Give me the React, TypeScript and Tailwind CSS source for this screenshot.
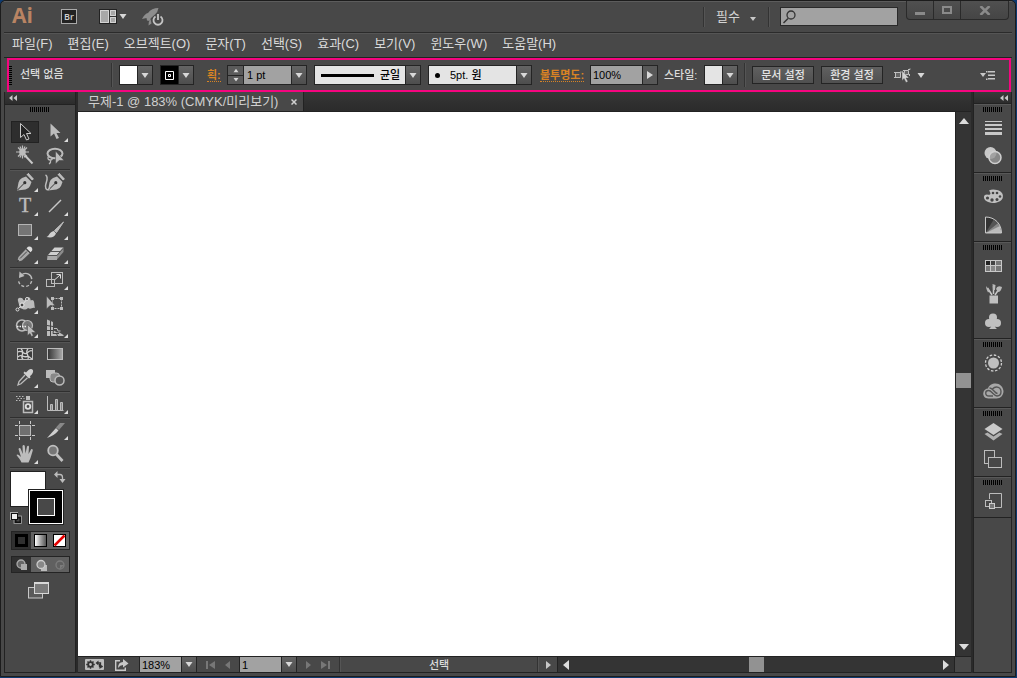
import React from 'react';

const KR = "font-['Liberation_Sans','Noto_Sans_CJK_KR',sans-serif]";

type Kids = { children?: React.ReactNode };

function Down({ className = '' }: { className?: string }) {
  return (
    <svg width="8" height="5" viewBox="0 0 8 5" className={'shrink-0 ' + className} aria-hidden="true">
      <path d="M0.5 0h7L4 5z" fill="#d8d8d8" />
    </svg>
  );
}

function Grip() {
  return (
    <div className="mx-auto flex h-[5px] w-[19px] shrink-0 justify-between">
      {Array.from({ length: 10 }, (_, i) => (
        <i key={i} className="h-full w-px bg-black" />
      ))}
    </div>
  );
}

function ArrowButton({ label }: { label: string }) {
  return (
    <button
      type="button"
      aria-label={label}
      className="flex h-full w-[15px] shrink-0 items-center justify-center border-l border-[#242424] bg-linear-to-b from-[#646464] to-[#4e4e4e]"
    >
      <Down />
    </button>
  );
}

function Divider({ className = '' }: { className?: string }) {
  return <i className={'w-0.5 shrink-0 border-l border-r border-l-[#333] border-r-[#555] ' + className} />;
}

/* ---------- Toolbox ---------- */

function Tool({ label, more, active, children }: Kids & { label: string; more?: boolean; active?: boolean }) {
  return (
    <button
      type="button"
      aria-label={label}
      title={label}
      className="flex h-6 w-[30px] items-center justify-center"
    >
      <svg width="30" height="24" viewBox="0 0 30 24" fill="none" stroke="none" className="shrink-0">
        {active && <rect x="1.5" y="1.5" width="27" height="21" fill="#2e2e2e" stroke="#222" />}
        {children}
        {more && <path d="M28 18v4h-4z" fill="#dcdcdc" />}
      </svg>
    </button>
  );
}

const L = '#bcbcbc';

function ToolGroup({ children }: Kids) {
  return (
    <div className="grid w-[60px] grid-cols-2 border-b border-[#2f2f2f] pb-px shadow-[0_1px_0_0_#555]">
      {children}
    </div>
  );
}

function Nib() {
  return (
    <>
      <path d="M7 20.500l1.500-8q.5-3 3.500-4.500l4-1.500 5.500 5.500-1.500 4q-1.500 3-4.500 3.500z" fill={L} />
      <path d="M16 4.500l2.500-2 6 6.500-2.500 2z" fill={L} stroke="#333" strokeWidth=".7" />
      <path d="M7.500 20l6.500-6.500" stroke="#333" />
      <circle cx="14.800" cy="12.700" r="1.600" fill="#333" />
    </>
  );
}

function Toolbox() {
  return (
    <aside className="flex w-[72px] shrink-0 flex-col border-x border-b border-[#222] bg-[#484848]">
      <button type="button" aria-label="패널 축소" className="flex h-[13px] w-full shrink-0 items-center border-b border-[#222] bg-linear-to-b from-[#3a3a3a] to-[#2c2c2c] pl-1">
        <Chevrons />
      </button>
      <div className="flex flex-col pt-0.5 pl-[5px]">
        <div className="pr-[7px]"><Grip /></div>
        <div className="h-2" />
        <ToolGroup>
          <Tool label="선택 도구" active>
            <path d="M10.500 3.500v14l3.500-3 2.500 5.500 2.500-1-2.500-5.500h4.500z" fill="#222" stroke="#c8c8c8" />
          </Tool>
          <Tool label="직접 선택 도구" more>
            <path d="M10.500 3.500v13l3.500-3 2.500 5.500 2.500-1-2.500-5h4z" fill={L} />
          </Tool>
          <Tool label="자동 선택 도구">
            <path d="M12.500 1.500v13M6 8h13M8 3.500l9 9M17 3.500l-9 9M10 2.500l5 11M15 2.500l-5 11" stroke={L} strokeWidth="1.200" />
            <circle cx="12.500" cy="8" r="3.300" fill={L} />
            <path d="M15 11.500l7.500 8" stroke="#c8c8c8" strokeWidth="2" />
          </Tool>
          <Tool label="올가미 도구">
            <ellipse cx="15" cy="9.500" rx="7.500" ry="4.800" stroke={L} strokeWidth="2" />
            <path d="M9 12c-2 2-1 4 1 4s3-1 1.500-2.500M9.500 16c2 1 1 3-.5 4" stroke={L} strokeWidth="1.300" />
            <path d="M15.500 7v13l3.500-3.500h5z" fill={L} stroke="#444" strokeWidth=".5" />
          </Tool>
        </ToolGroup>
        <ToolGroup>
          <Tool label="펜 도구" more><Nib /></Tool>
          <Tool label="곡률 도구">
            <g transform="translate(1 0)"><Nib /></g>
            <path d="M5.500 5c4 2 0 8 0 11 0 4 2.500 5 4 2" stroke={L} strokeWidth="1.500" />
          </Tool>
          <Tool label="문자 도구" more>
            <text x="15" y="18" textAnchor="middle" fontFamily="Liberation Serif, serif" fontSize="20" fill={L} stroke={L} strokeWidth=".4">T</text>
          </Tool>
          <Tool label="선분 도구" more><path d="M9 18L21 6" stroke="#c8c8c8" strokeWidth="1.500" /></Tool>
          <Tool label="사각형 도구" more><rect x="8.500" y="6.500" width="13" height="11" fill="#757575" stroke="#b4b4b4" /></Tool>
          <Tool label="페인트브러시 도구" more>
            <path d="M23.500 4l-7 10.500-2-2z" fill={L} stroke={L} />
            <path d="M14 13l2 2.500c-1.500 4-5 4.500-9.500 3.500 3-1 2.500-5 7.500-6z" fill="#d0d0d0" />
          </Tool>
          <Tool label="연필 도구" more>
            <path d="M7 20l1.500-5 7.500-8 4 4-8 7.500z" fill="#a8a8a8" />
            <path d="M16.500 6.300l1.500-1.500q2-1 3.500.5t.5 3.500l-1.500 1.500z" fill="#dcdcdc" />
            <path d="M7 20l.7-2.500 1.800 1.700z" fill="#222" />
            <path d="M15.500 6.800l4.500 4M10 16.500l7-7" stroke="#444" strokeWidth="1" />
          </Tool>
          <Tool label="지우개 도구" more>
            <path d="M8 13l6.500-7.500h9L17 13z" fill="#d0d0d0" />
            <path d="M17 13l6.500-7.500v4.500L17 17.500z" fill="#8c8c8c" />
            <path d="M7.500 13.500H17v4.500H7z" fill="#aaa" />
            <path d="M11 9.500h9M7.500 13.500h9.500l6-7" stroke="#555" />
          </Tool>
        </ToolGroup>
        <ToolGroup>
          <Tool label="회전 도구" more>
            <path d="M12 6.500C17 3.500 22 7 21.800 12c-.3 4-3.300 6.500-6.800 6.500s-6.800-3-6.500-7" stroke={L} strokeWidth="1.400" strokeDasharray="13 2 3 2 3 2 3 2 3 2" />
            <path d="M9.500 3.500l-.5 6.500 5.500-2z" fill={L} />
          </Tool>
          <Tool label="크기 조절 도구" more>
            <rect x="11.500" y="4.500" width="11" height="11" stroke={L} />
            <rect x="6.500" y="11.500" width="8" height="7" stroke={L} />
            <path d="M15 11.500l5-4.500M16.500 6.500h4v4" stroke="#ddd" />
          </Tool>
          <Tool label="폭 도구" more>
            <path d="M8 9c-1-3 2-4 3-3 3 0 1 3 4 2 1-3 3-4 5-2 1 2 0 3 2 2 3 0 2 5 3 8-3-1-4 2-7 0-3 3-5 1-8 0z" fill={L} />
            <path d="M7 18l5.500-5.500 5-6" stroke="#e0e0e0" />
            <circle cx="7.500" cy="17.500" r="1.500" fill="#444" stroke="#ddd" /><circle cx="12" cy="13" r="2" fill="#444" stroke="#eee" /><circle cx="17" cy="7" r="1.500" fill="#444" stroke="#ddd" />
          </Tool>
          <Tool label="자유 변형 도구">
            <rect x="12.500" y="6.500" width="9" height="10" stroke={L} strokeDasharray="2 1" />
            <path d="M11 5h3v3h-3zM20 5h3v3h-3zM20 15h3v3h-3zM11 15h3v3h-3z" fill={L} />
            <path d="M6.500 4v13l3.500-3.500h5z" fill={L} stroke="#444" strokeWidth=".5" />
          </Tool>
          <Tool label="도형 구성 도구" more>
            <circle cx="12" cy="9.500" r="5.500" stroke={L} strokeWidth="1.500" /><circle cx="17.500" cy="9.500" r="5" fill="#777" stroke={L} strokeWidth="1.200" />
            <path d="M7 10.500h10" stroke="#eee" strokeWidth="1.500" strokeDasharray="1.500 1" />
            <path d="M17.500 8.500v11l2.500-2 1.500 3 1.800-1-1.500-3h4z" fill={L} stroke="#444" strokeWidth=".5" />
          </Tool>
          <Tool label="원근감 격자 도구" more>
            <path d="M7 3.500l6 2.500v8l4 2.500h2.500l4 2.500v1H7z" fill={L} />
            <path d="M10.500 5v15M7 9.500l6 1M7 14.500h6M13.500 14l-.5 3.500h6M16.500 17.500l1 2.500" stroke="#444" strokeWidth="1" />
            <path d="M14 12.500h3l1 2.500h2.500" stroke={L} />
          </Tool>
        </ToolGroup>
        <ToolGroup>
          <Tool label="망 도구">
            <rect x="7.500" y="6.500" width="15" height="11" stroke={L} fill="#3c3c3c" />
            <path d="M8 10c4-3 6 4 9 1s4-3 5-2M8 15c3-4 6 2 10-1l4 3M11 7c5 4-2 7 2 10M18 7c-4 4 2 6 0 10" stroke="#d0d0d0" strokeWidth="1.300" />
          </Tool>
          <Tool label="그레이디언트 도구">
            <defs><linearGradient id="tg"><stop stopColor="#333" /><stop offset="1" stopColor="#aaa" /></linearGradient></defs>
            <rect x="7.500" y="6.500" width="15" height="11" fill="url(#tg)" stroke={L} />
          </Tool>
          <Tool label="스포이드 도구" more>
            <path d="M16 6.500l2.500-2.500q3-2 4.500.3.700 2-1 4l-2 2 .5 1.200-1.500 1-5.500-5.500 1-1.500z" fill="#cfcfcf" />
            <path d="M15 9l-6 6.500-1 3.500 3-1.200 6.500-6" stroke={L} strokeWidth="1.300" />
          </Tool>
          <Tool label="블렌드 도구">
            <path d="M6 4h9v8H6z" fill={L} /><rect x="10" y="7" width="9.500" height="9" rx="3" fill="#888" stroke={L} />
            <circle cx="19.500" cy="14.500" r="4.500" fill="#555" stroke={L} strokeWidth="1.500" />
          </Tool>
        </ToolGroup>
        <ToolGroup>
          <Tool label="심볼 분무기 도구" more>
            <path d="M13.500 9.500h9v11h-9z" stroke={L} strokeWidth="1.500" /><path d="M16 4h4v4h-4z" fill={L} />
            <circle cx="18" cy="14.500" r="2.300" stroke="#ddd" strokeWidth="1.800" />
            <path d="M6 4.500h9M7.500 6.500h7M6 8.500h5" stroke="#bbb" strokeDasharray="1.500 1.500" />
          </Tool>
          <Tool label="막대 그래프 도구" more>
            <path d="M7.500 4v14.500h16" stroke={L} /><path d="M10.500 12.500h2v6h-2zM15.500 7.500h2v11h-2zM20.500 10.500h2v8h-2z" stroke={L} fill="#888" />
          </Tool>
        </ToolGroup>
        <ToolGroup>
          <Tool label="대지 도구">
            <rect x="9.500" y="7.500" width="11" height="10" fill="#707070" stroke={L} />
            <path d="M9.500 3v3M20.500 3v3M9.500 19v3M20.500 19v3M5 7.500h3M22 7.500h3M5 17.500h3M22 17.500h3" stroke="#c8c8c8" />
          </Tool>
          <Tool label="분할 영역 도구" more>
            <path d="M7 20l9-10 2.500 2.500q-4 5-11.500 7.500z" fill="#d0d0d0" /><path d="M16 9.500l4-4.500h5l-6 7z" fill="#888" />
          </Tool>
          <Tool label="손 도구" more>
            <path d="M11.500 20.500c-1-3-3.500-5-5-7.500 1-1.500 2.500 0 4.500 2L8.500 7c.5-1.500 2-1 2.300 0l2 5-.3-8c.5-1.500 2-1.200 2.300 0l.7 7.500L17 4.500c.8-1.300 2-.7 2 .5l-.5 7L21 7.500c1-1 2.200 0 1.700 1.200L20.500 16l-2 4.500z" fill={L} />
          </Tool>
          <Tool label="돋보기 도구">
            <circle cx="13" cy="8.500" r="4.800" fill="#777" stroke="#c0c0c0" strokeWidth="1.800" /><path d="M16.500 12.500l6 6.500" stroke="#c0c0c0" strokeWidth="2.800" />
          </Tool>
        </ToolGroup>

        <div className="relative mt-[3px] h-[56px] w-[60px]">
          <button type="button" aria-label="칠" className="absolute top-0 left-0 size-[36px] border border-[#222] bg-white" />
          <button type="button" aria-label="획" className="absolute top-[18px] left-[18px] flex size-[36px] items-center justify-center border border-[#222] bg-black outline outline-1 -outline-offset-2 outline-white">
            <i className="size-[18px] border border-white bg-[#484848]" />
          </button>
          <button type="button" aria-label="칠과 획 교체" className="absolute top-0 left-[43px] size-[14px]">
            <svg width="14" height="14" viewBox="0 0 14 14" fill="none"><path d="M3 3.500h4q2.500 0 2.500 3v3" stroke={L} strokeWidth="1.300" /><path d="M1 3.500L4.500 0v7zM6.500 8h6l-3 4z" fill={L} /></svg>
          </button>
          <button type="button" aria-label="초기값 칠과 획" className="absolute top-[41px] left-0 size-3">
            <svg width="12" height="12" viewBox="0 0 12 12" fill="none"><rect x="5.500" y="5.500" width="5" height="5" stroke="#111" strokeWidth="2" /><rect x="4" y="4" width="7.500" height="7.500" stroke="#aaa" strokeWidth=".8" /><rect x=".5" y=".5" width="7" height="7" fill="#eee" stroke="#aaa" /><rect x="1.500" y="1.500" width="6" height="6" fill="#eee" stroke="#111" /></svg>
          </button>
        </div>
        <div className="mt-1 ml-px flex h-[19px] w-[59px] border border-[#242424] bg-[#626262]">
          <button type="button" aria-label="색상" className="flex flex-1 items-center justify-center bg-[#303030]"><i className="size-[13px] border-[3px] border-black bg-[#303030]" /></button>
          <button type="button" aria-label="그레이디언트" className="flex flex-1 items-center justify-center"><i className="size-[13px] border border-black bg-linear-to-r from-white to-[#555]" /></button>
          <button type="button" aria-label="없음" className="flex flex-1 items-center justify-center">
            <svg width="13" height="13" viewBox="0 0 13 13"><rect x=".5" y=".5" width="12" height="12" fill="#fff" stroke="#000" /><path d="M1.500 11.500l10-10" stroke="#e60000" strokeWidth="2.500" /></svg>
          </button>
        </div>
        <div className="mt-1.5 ml-px flex h-[17px] w-[59px] border border-[#242424] bg-[#606060]">
          <button type="button" aria-label="표준 그리기" className="flex flex-1 items-center justify-center bg-[#303030]"><svg width="14" height="12" viewBox="0 0 14 12"><circle cx="6" cy="5" r="4" fill="#666" stroke="#aaa" strokeWidth="1.300" /><path d="M6 5h6v6H6z" fill="#aaa" /></svg></button>
          <button type="button" aria-label="배경 그리기" className="flex flex-1 items-center justify-center"><svg width="14" height="12" viewBox="0 0 14 12"><path d="M7 6h6v6H7z" fill="#bbb" /><circle cx="7" cy="5.500" r="4" fill="#888" stroke="#ccc" strokeWidth="1.300" /></svg></button>
          <button type="button" aria-label="내부 그리기" className="flex flex-1 items-center justify-center"><svg width="14" height="12" viewBox="0 0 14 12"><circle cx="7" cy="6" r="4" fill="none" stroke="#7c7c7c" strokeWidth="1.300" /><path d="M7 6h4l-4 4z" fill="#7c7c7c" /></svg></button>
        </div>
        <button type="button" aria-label="화면 모드 변경" className="mt-[9px] ml-[18px] h-[17px] w-[21px]">
          <svg width="21" height="17" viewBox="0 0 21 17"><rect x=".5" y="5.500" width="14" height="10.500" fill="#5a5a5a" stroke="#c8c8c8" /><rect x="6.500" y=".5" width="14" height="11" fill="#7a7a7a" stroke="#d8d8d8" /><path d="M6 1.500h15" stroke="#d8d8d8" /></svg>
        </button>
      </div>
    </aside>
  );
}

function Chevrons() {
  return (
    <svg width="8" height="6" viewBox="0 0 8 6" fill="#c8c8c8" aria-hidden="true"><path d="M3.500 0v6L0 3zM8 0v6L4.500 3z" /></svg>
  );
}

/* ---------- Panel dock ---------- */

function PanelIcon({ label, children }: Kids & { label: string }) {
  return (
    <button type="button" aria-label={label} title={label} className="flex h-7 w-full items-center justify-center">
      <svg width="24" height="24" viewBox="0 0 24 24" fill="none">{children}</svg>
    </button>
  );
}

function PanelGroup({ children }: Kids) {
  return (
    <section className="border-b border-[#222] pb-0.5 shadow-[inset_0_1px_0_0_#585858]">
      <div className="py-[3px]"><Grip /></div>
      <div className="-mt-px">{children}</div>
    </section>
  );
}

function Dock() {
  return (
    <aside className="flex w-[39px] shrink-0 flex-col border-x border-b border-[#222] bg-[#484848]">
      <button type="button" aria-label="패널 확장" className="flex h-3 w-full shrink-0 items-center justify-end border-b border-[#222] bg-linear-to-b from-[#3a3a3a] to-[#2c2c2c] pr-[3px]">
        <Chevrons />
      </button>
      <PanelGroup>
        <PanelIcon label="획"><path d="M4 5h17v1H4zM4 8h17v2H4zM4 12h17v2H4zM4 16h17v3H4z" fill="#c8c8c8" /></PanelIcon>
        <PanelIcon label="투명도"><circle cx="9.500" cy="9" r="6" fill="#c8c8c8" /><circle cx="14" cy="13.500" r="6" fill="#999" fillOpacity=".8" stroke="#d0d0d0" strokeWidth="1.500" /></PanelIcon>
      </PanelGroup>
      <PanelGroup>
        <PanelIcon label="색상">
          <path d="M8 5.500q3-1.500 8-.5c5 1 7 5 5.500 8.500-2.500 5-12.500 6-17 2-2.500-2.500-2-6 1.500-6 3 1 5 0 2-4z" fill="#c0c0c0" />
          <g fill="#444"><circle cx="12" cy="8" r="1.300" /><circle cx="16" cy="8" r="1.300" /><circle cx="19" cy="11.500" r="1.300" /><circle cx="16" cy="14.500" r="1.500" /><circle cx="11" cy="15" r="1.700" /><circle cx="6.500" cy="13" r="1.600" /></g>
        </PanelIcon>
        <PanelIcon label="색상 안내">
          <path d="M4.500 4v16h16C20.500 11 14 4 4.500 4z" fill="#333" />
          <path d="M4.500 20L13 6l4 4z" fill="#555" /><path d="M4.500 20L17 10l2 4z" fill="#888" /><path d="M4.500 20L19 13l1.500 7z" fill="#bbb" />
          <path d="M4.500 4v16h16C20.500 11 14 4 4.500 4z" stroke="#c8c8c8" />
        </PanelIcon>
      </PanelGroup>
      <PanelGroup>
        <PanelIcon label="견본"><path d="M4 6h17v12H4z" fill="#c8c8c8" /><path d="M5 7h4v4H5z" fill="#222" /><path d="M10 7h4v4h-4z" fill="#444" /><path d="M15 7h5v4h-5zM5 12h4v5H5z" fill="#777" /><path d="M10 12h4v5h-4z" fill="#888" /><path d="M15 12h5v5h-5z" fill="#777" /></PanelIcon>
        <PanelIcon label="브러쉬"><path d="M8.500 13.500h8.500v8H8.500z" fill="#c0c0c0" /><path d="M11 13L6.500 6M12.500 12V4M14 13l4-6" stroke="#c8c8c8" strokeWidth="1.500" /><path d="M5 4l4 5-2 1.500q-2-3-2-6.500zM11.500 2l3 1-.5 5h-2zM15 7q1-4 6-2-1 5-4 5z" fill="#b8b8b8" /></PanelIcon>
        <PanelIcon label="심볼"><circle cx="12" cy="7.500" r="4" fill="#c0c0c0" /><circle cx="8" cy="13" r="4" fill="#c0c0c0" /><circle cx="16" cy="13" r="4" fill="#c0c0c0" /><path d="M11 10h2q0 7 3 9H8q3-2 3-9z" fill="#c0c0c0" /></PanelIcon>
      </PanelGroup>
      <PanelGroup>
        <PanelIcon label="모양"><circle cx="12.500" cy="12" r="5.500" fill="#c0c0c0" /><circle cx="12.500" cy="12" r="8" stroke="#d0d0d0" strokeWidth="1.300" strokeDasharray="2.500 1.700" /></PanelIcon>
        <PanelIcon label="Creative Cloud">
          <path d="M7.500 19.500C3.500 19.500 2 16.500 2.300 14c.4-3 2.500-4.300 4.700-4.500 1-3.500 4-5 7.500-5 4.500.2 7.500 3 8 7.500 0 4.500-3 7.500-7 7.500z" fill="#a8a8a8" />
          <path d="M12 17H8c-2 0-3.300-1.300-3.300-3S6 11.500 7.500 11.500c2 0 3 1.500 4.500 3s2.500 2.500 4 2.500c2.500 0 4-2 4-4.500S18 8 15.500 8 12 9.500 11 10.500M16.500 14.500q-1.500-.2-2.500-1.500l-2.500-2.500Q10 9 8.500 9" stroke="#555" strokeWidth="1.400" />
        </PanelIcon>
      </PanelGroup>
      <PanelGroup>
        <PanelIcon label="레이어"><path d="M12.500 3l9 6-9 6-9-6z" fill="#cacaca" /><path d="M3.500 14l3-1.500 6 4 6-4 3 1.500-9 6.500z" fill="#b0b0b0" /></PanelIcon>
        <PanelIcon label="대지"><rect x="3.500" y="2.500" width="10" height="13" stroke={L} /><rect x="7.500" y="9.500" width="13" height="10" fill="#484848" stroke={L} /></PanelIcon>
      </PanelGroup>
      <PanelGroup>
        <PanelIcon label="링크"><path d="M8.500 10V4.500h12v14H13" stroke={L} /><rect x="4.500" y="11.500" width="6" height="6" stroke={L} /><rect x="8.500" y="14.500" width="5" height="5" fill="#777" stroke="#ccc" /></PanelIcon>
      </PanelGroup>
    </aside>
  );
}

/* ---------- Bars ---------- */

const menus = ['파일(F)', '편집(E)', '오브젝트(O)', '문자(T)', '선택(S)', '효과(C)', '보기(V)', '윈도우(W)', '도움말(H)'];

function TitleBar() {
  return (
    <header className="flex h-8 shrink-0 items-center border-b border-[#2b2b2b] pl-2 shadow-[inset_0_1px_0_0_#5c5c5c]">
      <h1 className="h-6 w-[49px] font-['Open_Sans',sans-serif] text-[21px] leading-5 font-bold text-[#b98463]">Ai</h1>
      <button type="button" className="flex h-[15px] w-4 items-center justify-center border border-[#aaa] bg-[#222] font-['Open_Sans',sans-serif] text-[9px] leading-none font-semibold text-[#d0d0d0]">Br</button>
      <button type="button" aria-label="문서 정렬" className="ml-[22px] flex items-center gap-0.5">
        <svg width="18" height="15" viewBox="0 0 18 15"><rect x=".5" y=".5" width="17" height="14" fill="#c8c8c8" stroke="#222" /><path d="M10.500 1v13M10.500 7.500h6.500" stroke="#333" /><path d="M1.500 1.500h8v12h-8zM11.500 1.500h5v5h-5zM11.500 8.500h5v5h-5z" fill="#a8a8a8" stroke="#d4d4d4" /></svg>
        <Down />
      </button>
      <button type="button" aria-label="GPU 성능" className="ml-[15px]">
        <svg width="22" height="20" viewBox="0 0 22 20" fill="none"><path d="M16.500 1q-7 0-10.500 5Q3 6.500 0 12l4.500-1 .5 2.500 2.500.5q1-3.500 5-6 3.500-3 4-7z" fill="#8d8d8d" /><path d="M8.500 12q-2.500 3-2 6.500l3-2z" fill="#8d8d8d" /><path d="M13.500 9.500a4.500 4.500 0 1 0 5 0M16 7v6" stroke="#484848" strokeWidth="3.500" /><path d="M13.500 9.500a4.500 4.500 0 1 0 5 0M16 7v6" stroke="#c4c4c4" strokeWidth="1.800" /></svg>
      </button>
      <div className="flex-1" />
      <Divider className="h-5" />
      <select aria-label="작업 영역" className={'ml-[11px] h-5 w-7 appearance-none bg-transparent text-[13px] leading-5 text-[#d4d4d4] ' + KR}><option>필수</option></select>
      <svg width="6" height="4" viewBox="0 0 6 4" className="mt-1 ml-1.5"><path d="M0 0h6L3 4z" fill="#c8c8c8" /></svg>
      <Divider className="ml-3 h-5" />
      <label className="ml-2.5 flex h-[19px] w-[118px] items-center border border-[#2a2a2a] bg-[#a2a2a2] pl-0.5">
        <svg width="13" height="14" viewBox="0 0 13 14" fill="none" className="shrink-0"><circle cx="8" cy="5" r="4" stroke="#333" strokeWidth="1.300" /><path d="M5 8.500L.5 13" stroke="#333" strokeWidth="1.500" /></svg>
        <input type="search" aria-label="도움말 검색" className="min-w-0 flex-1 bg-transparent text-xs outline-none" />
      </label>
      <div className="mr-[3px] ml-2 flex h-[19px] w-[103px] self-start divide-x divide-[#2a2a2a] rounded-b-[4px] border border-t-0 border-[#2a2a2a] bg-linear-to-b from-[#505050] to-[#454545]">
        <button type="button" aria-label="최소화" className="flex flex-1 items-center justify-center"><i className="mt-1.5 h-[3px] w-2.5 bg-[#8a8a8a]" /></button>
        <button type="button" aria-label="최대화" className="flex flex-1 items-center justify-center"><i className="h-2 w-2.5 border-2 border-[#8a8a8a]" /></button>
        <button type="button" aria-label="닫기" className="flex w-[47px] items-center justify-center"><svg width="12" height="9" viewBox="0 0 12 9"><path d="M1.500 0l9 9M10.500 0l-9 9" stroke="#8a8a8a" strokeWidth="2.500" /></svg></button>
      </div>
    </header>
  );
}

function ControlBar() {
  const box = 'flex h-5 shrink-0 items-stretch border border-[#242424] ';
  return (
    <div className="shrink-0 border-t border-[#222] pr-px pl-[3px]">
      <div className={'flex h-[34px] items-center border-2 border-[#f5057f] text-[11px] leading-4 font-medium text-[#dcdcdc] ' + KR}>
        <div className="flex h-[19px] w-[3px] flex-col justify-between">
          {Array.from({ length: 10 }, (_, i) => <i key={i} className="h-px bg-black" />)}
        </div>
        <span className="ml-2 w-[91px] pb-0.5 whitespace-nowrap">선택 없음</span>
        <Divider className="h-6" />
        <div className={box + 'ml-1.5 w-[34px]'}>
          <button type="button" aria-label="칠 색상" className="flex-1 bg-white" />
          <ArrowButton label="칠 견본 열기" />
        </div>
        <div className={box + 'ml-[7px] w-[34px]'}>
          <button type="button" aria-label="획 색상" className="flex flex-1 items-center justify-center bg-black">
            <svg width="9" height="9" viewBox="0 0 9 9" fill="none" stroke="#fff"><path d="M.5.5h8v8h-8zM3.500 3.500h2v2h-2z" /></svg>
          </button>
          <ArrowButton label="획 견본 열기" />
        </div>
        <label htmlFor="weight" className="ml-[13px] w-5 shrink-0 font-bold text-[#d98324]"><span className="border-b border-dotted border-[#d98324]">획:</span></label>
        <div className={box + 'w-20'}>
          <div className="flex w-4 shrink-0 flex-col divide-y divide-[#242424] border-r border-[#242424] bg-[#5a5a5a]">
            <button type="button" aria-label="증가" className="flex flex-1 items-center justify-center"><Down className="rotate-180 scale-75" /></button>
            <button type="button" aria-label="감소" className="flex flex-1 items-center justify-center"><Down className="scale-75" /></button>
          </div>
          <input id="weight" defaultValue="1 pt" className="w-0 min-w-0 flex-1 bg-[#a2a2a2] pl-[3px] text-black outline-none" />
          <ArrowButton label="획 두께 목록" />
        </div>
        <div className={box + 'ml-[7px] w-[107px]'}>
          <div className="flex flex-1 items-center bg-[#e4e4e4] pl-1.5 text-black">
            <i className="h-[3px] w-[53px] shrink-0 bg-black" />
            <select aria-label="변수 폭 프로파일" className="w-7 flex-1 appearance-none bg-transparent pl-1.5"><option>균일</option></select>
          </div>
          <ArrowButton label="프로파일 목록" />
        </div>
        <div className={box + 'ml-[7px] w-[104px]'}>
          <div className="flex flex-1 items-center bg-[#e4e4e4] pl-1.5 text-black">
            <i className="size-[5px] shrink-0 rounded-full bg-black" />
            <select aria-label="브러쉬 정의" className="w-14 flex-1 appearance-none bg-transparent pl-2.5"><option>5pt. 원</option></select>
          </div>
          <ArrowButton label="브러쉬 목록" />
        </div>
        <label htmlFor="opacity" className="ml-2 w-[50px] shrink-0 font-bold whitespace-nowrap text-[#d98324]"><span className="border-b border-dotted border-[#d98324]">불투명도:</span></label>
        <div className={box + 'w-[68px]'}>
          <input id="opacity" defaultValue="100%" className="w-0 min-w-0 flex-1 bg-[#a2a2a2] pl-0.5 text-black outline-none" />
          <button type="button" aria-label="불투명도 슬라이더" className="flex w-[15px] shrink-0 items-center justify-center border-l border-[#242424] bg-[#585858]"><svg width="6" height="8" viewBox="0 0 6 8"><path d="M0 0v8l6-4z" fill="#d8d8d8" /></svg></button>
        </div>
        <span className="ml-1.5 w-10 shrink-0 whitespace-nowrap">스타일:</span>
        <div className={box + 'w-[34px]'}>
          <button type="button" aria-label="그래픽 스타일" className="flex-1 bg-[#e4e4e4]" />
          <ArrowButton label="스타일 목록" />
        </div>
        <Divider className="ml-1.5 h-6" />
        <button type="button" className="ml-1.5 h-[18px] w-[62px] shrink-0 border border-[#242424] bg-linear-to-b from-[#606060] to-[#505050] whitespace-nowrap text-[#e4e4e4]">문서 설정</button>
        <button type="button" className="ml-[7px] h-[18px] w-[62px] shrink-0 border border-[#242424] bg-linear-to-b from-[#606060] to-[#505050] whitespace-nowrap text-[#e4e4e4]">환경 설정</button>
        <button type="button" aria-label="유사 오브젝트 선택" className="ml-[11px] flex shrink-0 items-center gap-1.5">
          <svg width="17" height="15" viewBox="0 0 17 15" fill="none"><path d="M1.500 4.500h5v5h-5zM10.500 2.500h4v4h-4z" fill="#666" stroke="#c0c0c0" /><path d="M0 4.500h2M0 9.500h2M7 3v2M9 2.500h2M14 1.500h2v-1M15.500 6v2" stroke="#c0c0c0" /><path d="M8 2.500v10l2-2 2 4 2-1-2-3.500h3z" fill="#d0d0d0" stroke="#484848" strokeWidth=".4" /></svg>
          <Down />
        </button>
        <div className="flex-1" />
        <button type="button" aria-label="패널 메뉴" className="mr-[14px]">
          <svg width="15" height="9" viewBox="0 0 15 9"><path d="M0 2h6L3 6zM6 0h1.500v1.500H6zM6 7.500h1.500V9H6zM8 0h7v1.500H8zM8 3.500h7V5H8zM8 7h7v1.500H8z" fill="#c8c8c8" /></svg>
        </button>
      </div>
    </div>
  );
}

function NavButton({ label, flip, bar, on }: { label: string; flip?: boolean; bar?: boolean; on?: boolean }) {
  return (
    <button type="button" aria-label={label} className="flex h-full w-[15px] shrink-0 items-center justify-center">
      <svg width="9" height="8" viewBox="0 0 9 8" fill={on ? '#c8c8c8' : '#777'} className={flip ? 'rotate-180' : ''}>
        <path d={bar ? 'M0 0v8l6-4zM7 0h2v8H7z' : 'M2 0v8l5-4z'} />
      </svg>
    </button>
  );
}

function StatusBar() {
  return (
    <footer className="flex h-[17px] shrink-0 border-y border-[#222] bg-[#484848]">
      <div className={'flex w-[480px] shrink-0 items-stretch border-r border-[#222] text-[11px] leading-[15px] font-medium text-[#dcdcdc] ' + KR}>
        <button type="button" aria-label="동기화 설정" className="ml-[7px]">
          <svg width="19" height="11" viewBox="0 0 19 11" fill="none"><rect width="19" height="11" rx="1" fill="#bcbcbc" /><circle cx="5.500" cy="5.500" r="2.300" stroke="#333" strokeWidth="1.800" /><path d="M5.500 1.200v1.800M5.500 8v1.800M1.200 5.500H3M8 5.500h1.800M2.500 2.500l1.200 1.200M8.500 2.500L7.300 3.700M2.500 8.500l1.200-1.200M8.500 8.500L7.300 7.300" stroke="#333" strokeWidth="1.400" /><path d="M12 4h3.500v3M17.500 7.500H14.500V5" stroke="#333" strokeWidth="1.300" /><path d="M13.500 1.500v5L10.500 4zM14.500 5v5.000l3.500-2.500z" fill="#333" /></svg>
        </button>
        <button type="button" aria-label="공유" className="ml-[11px]">
          <svg width="14" height="12" viewBox="0 0 14 12" fill="none"><path d="M5 1.700H.7v9.600h9.600V8.500" stroke="#c8c8c8" strokeWidth="1.400" /><path d="M3 9q0-6 5-6V0l5.500 4.500-5.500 4V6Q5 6 3 9z" fill="#c8c8c8" /></svg>
        </button>
        <div className="ml-2.5 flex w-[58px] border-x border-[#242424]">
          <input aria-label="확대/축소" defaultValue="183%" className="w-0 min-w-0 flex-1 bg-[#a2a2a2] pt-0.5 pl-0.5 text-black outline-none" />
          <ArrowButton label="확대/축소 목록" />
        </div>
        <div className="flex w-[42px] justify-between pr-1 pl-1.5"><NavButton label="처음" flip bar /><NavButton label="이전" flip /></div>
        <div className="flex w-[58px] border-x border-[#242424]">
          <input aria-label="대지 탐색" defaultValue="1" className="w-0 min-w-0 flex-1 bg-[#a2a2a2] pt-0.5 pl-0.5 text-black outline-none" />
          <ArrowButton label="대지 목록" />
        </div>
        <div className="flex w-[42px] justify-between pr-1.5 pl-1"><NavButton label="다음" /><NavButton label="마지막" bar /></div>
        <Divider />
        <span className="flex-1 pt-px text-center">선택</span>
        <Divider />
        <div className="flex w-[18px] justify-center"><NavButton label="상태 표시 메뉴" on /></div>
      </div>
      <div className="flex min-w-0 flex-1 items-stretch border-r border-[#222] bg-[#343434]">
        <button type="button" aria-label="왼쪽으로 스크롤" className="flex w-4 items-center justify-center"><svg width="6" height="10" viewBox="0 0 6 10"><path d="M6 0v10L0 5z" fill="#dcdcdc" /></svg></button>
        <div className="flex-1" />
        <div className="w-[15px] bg-[#929292]" />
        <div className="flex-1" />
        <button type="button" aria-label="오른쪽으로 스크롤" className="flex w-4 items-center justify-center"><svg width="6" height="10" viewBox="0 0 6 10"><path d="M0 0v10l6-5z" fill="#dcdcdc" /></svg></button>
      </div>
      <div className="w-4 shrink-0" />
    </footer>
  );
}

export default function App() {
  return (
    <div className={'flex min-h-screen flex-col bg-[#0d3a70] pr-px pb-px ' + KR}>
      <div className="flex flex-1 flex-col rounded-t-[5px] border border-[#1c1c1c] bg-[#484848] px-[3px] pb-[3px]">
        <TitleBar />
        <nav className="flex h-6 shrink-0 items-center gap-[15px] border-t border-[#555] pb-[3px] pl-2 text-[13px] leading-5 text-[#dadada]">
          {menus.map((m) => <a key={m} href="#" className="whitespace-nowrap">{m}</a>)}
        </nav>
        <ControlBar />
        <main className="flex min-w-0 flex-1 items-stretch">
          <Toolbox />
          <div className="w-0.5 shrink-0 bg-[#2a2a2a]" />
          <section className="flex min-w-0 flex-1 flex-col">
            <div className="flex h-5 shrink-0 border-b border-[#222] bg-linear-to-b from-[#363636] to-[#2b2b2b]">
              <div className="flex items-center border-r border-[#222] bg-[#484848] pr-1.5 pl-2.5 text-[13px] leading-[19px] text-[#d0d0d0]">
                <span className="w-[203px] whitespace-nowrap">무제-1 @ 183% (CMYK/미리보기)</span>
                <button type="button" aria-label="문서 닫기"><svg width="6" height="6" viewBox="0 0 6 6"><path d="M.5.5l5 5M5.500.5l-5 5" stroke="#d0d0d0" strokeWidth="1.500" /></svg></button>
              </div>
            </div>
            <div className="flex flex-1 items-stretch">
              <div className="flex-1 bg-white" />
              <div className="flex w-4 shrink-0 flex-col border-l border-[#222] bg-[#343434]">
                <button type="button" aria-label="위로 스크롤" className="flex h-[18px] items-center justify-center"><svg width="10" height="6" viewBox="0 0 10 6"><path d="M0 6h10L5 0z" fill="#dcdcdc" /></svg></button>
                <div className="flex-[243]" />
                <div className="h-[15px] bg-[#929292]" />
                <div className="flex-[250]" />
                <button type="button" aria-label="아래로 스크롤" className="flex h-[18px] items-center justify-center"><svg width="10" height="6" viewBox="0 0 10 6"><path d="M0 0h10L5 6z" fill="#dcdcdc" /></svg></button>
              </div>
            </div>
            <StatusBar />
          </section>
          <div className="w-0.5 shrink-0 bg-[#2a2a2a]" />
          <Dock />
        </main>
      </div>
    </div>
  );
}
